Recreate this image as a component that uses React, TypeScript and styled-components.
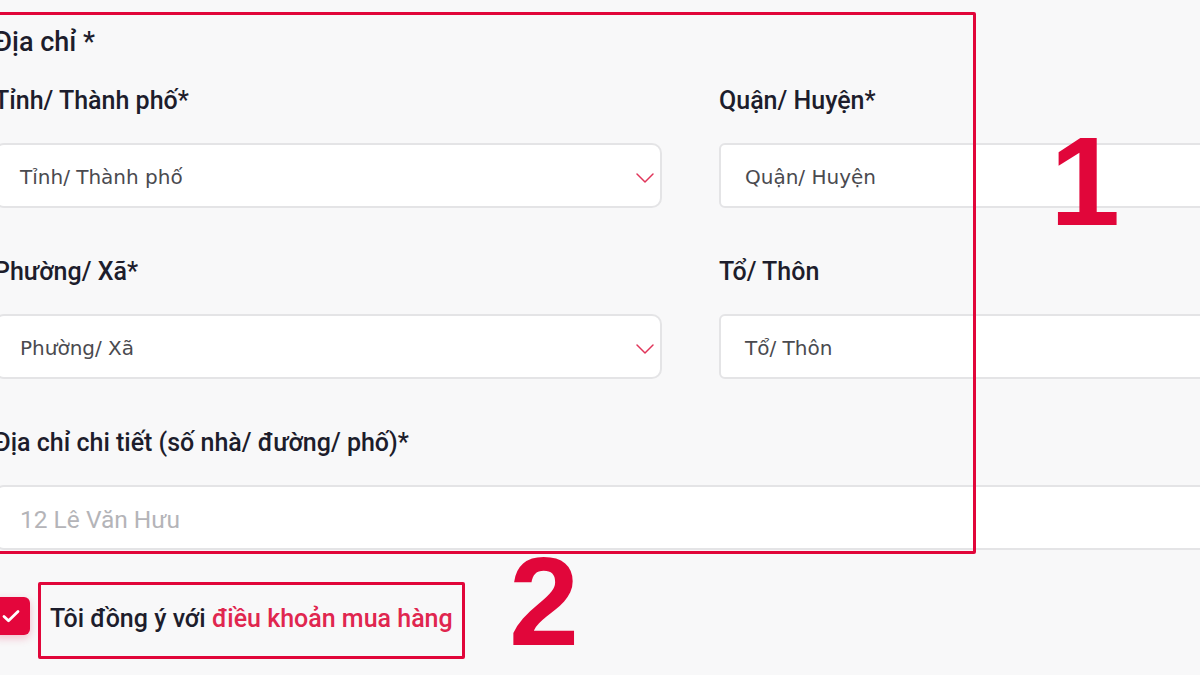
import styled, { createGlobalStyle } from "styled-components";

const GlobalStyle = createGlobalStyle`
  body {
    margin: 0;
    background: #f8f8f9;
    overflow: hidden;
  }
`;

const Page = styled.div`
  position: relative;
  width: 1200px;
  height: 675px;
  overflow: hidden;
  background: #f8f8f9;
  font-family: Roboto, "Liberation Sans", sans-serif;
  color: #1d1d2c;
`;

const Form = styled.div`
  margin-left: -6px;
  padding-top: 27px;
`;

const SectionTitle = styled.div`
  font-size: 27px;
  line-height: 30px;
  font-weight: 500;
  margin-bottom: 31px;
`;

const FieldGrid = styled.div`
  display: grid;
  grid-template-columns: 668px 668px;
  column-gap: 57px;
  row-gap: 51px;
`;

const Field = styled.div<{ $wide?: boolean }>`
  display: flex;
  flex-direction: column;
  gap: 29px;
  grid-column: ${(p) => (p.$wide ? "1 / -1" : "auto")};
`;

const Label = styled.div`
  font-size: 25px;
  line-height: 26px;
  font-weight: 500;
`;

const Control = styled.div<{ $round?: boolean }>`
  position: relative;
  height: 65px;
  box-sizing: border-box;
  display: flex;
  align-items: center;
  padding: 3px 24px 0;
  background: #fff;
  border: 2px solid #e4e4e6;
  border-radius: ${(p) => (p.$round ? "10px" : "6px")};
`;

const Placeholder = styled.span<{ $light?: boolean }>`
  font-family: ${(p) => (p.$light ? "Roboto, sans-serif" : '"DejaVu Sans", Verdana, sans-serif')};
  font-size: ${(p) => (p.$light ? "24.5px" : "20px")};
  color: ${(p) => (p.$light ? "#b4b4b8" : "#4a4a4f")};
`;

const Chevron = styled.svg`
  position: absolute;
  right: 5px;
  top: 50%;
  margin-top: -4px;
`;

const AgreeRow = styled.div`
  display: flex;
  align-items: center;
  gap: 20px;
  margin-top: 47px;
  margin-left: -2px;
`;

const CheckBox = styled.div`
  width: 38px;
  height: 38px;
  flex: none;
  border-radius: 6px;
  background: #e4063c;
  display: flex;
  align-items: center;
  justify-content: center;
  box-shadow: 0 3px 8px rgba(228, 6, 60, 0.25);
`;

const AgreeText = styled.span`
  font-size: 25px;
  font-weight: 500;
  padding-top: 4px;
`;

const TermsLink = styled.span`
  color: #e0264f;
`;

const Marker = styled.div<{ $x: number; $y: number; $w: number; $h: number }>`
  position: absolute;
  left: ${(p) => p.$x}px;
  top: ${(p) => p.$y}px;
  width: ${(p) => p.$w}px;
  height: ${(p) => p.$h}px;
  box-sizing: border-box;
  border: 3px solid #e1063a;
  border-radius: 2px;
  pointer-events: none;
`;

const StepNumber = styled.div<{ $x: number; $y: number }>`
  position: absolute;
  left: ${(p) => p.$x}px;
  top: ${(p) => p.$y}px;
  font-family: "Liberation Sans", Arial, sans-serif;
  font-weight: 700;
  font-size: 126px;
  line-height: 126px;
  color: #e1063a;
`;

function ChevronDown() {
  return (
    <Chevron width="20" height="12" viewBox="0 0 20 12" fill="none">
      <path d="M2 2l8 8 8-8" stroke="#e0355a" strokeWidth="1.5" strokeLinecap="round" strokeLinejoin="round" />
    </Chevron>
  );
}

export default function App() {
  return (
    <Page>
      <GlobalStyle />
      <Form>
        <SectionTitle>Địa chỉ *</SectionTitle>
        <FieldGrid>
          <Field>
            <Label>Tỉnh/ Thành phố*</Label>
            <Control $round>
              <Placeholder>Tỉnh/ Thành phố</Placeholder>
              <ChevronDown />
            </Control>
          </Field>
          <Field>
            <Label>Quận/ Huyện*</Label>
            <Control>
              <Placeholder>Quận/ Huyện</Placeholder>
            </Control>
          </Field>
          <Field>
            <Label>Phường/ Xã*</Label>
            <Control $round>
              <Placeholder>Phường/ Xã</Placeholder>
              <ChevronDown />
            </Control>
          </Field>
          <Field>
            <Label>Tổ/ Thôn</Label>
            <Control>
              <Placeholder>Tổ/ Thôn</Placeholder>
            </Control>
          </Field>
          <Field $wide>
            <Label>Địa chỉ chi tiết (số nhà/ đường/ phố)*</Label>
            <Control $round>
              <Placeholder $light>12 Lê Văn Hưu</Placeholder>
            </Control>
          </Field>
        </FieldGrid>
        <AgreeRow>
          <CheckBox>
            <svg width="20" height="16" viewBox="0 0 20 16" fill="none">
              <path d="M3 8.5l4.5 4.2L17 3.5" stroke="#fff" strokeWidth="2.8" strokeLinecap="round" strokeLinejoin="round" />
            </svg>
          </CheckBox>
          <AgreeText>
            Tôi đồng ý với <TermsLink>điều khoản mua hàng</TermsLink>
          </AgreeText>
        </AgreeRow>
      </Form>
      <Marker $x={-20} $y={12} $w={996} $h={542} />
      <Marker $x={38} $y={582} $w={427} $h={77} />
      <StepNumber $x={1050} $y={119}>1</StepNumber>
      <StepNumber $x={509} $y={539}>2</StepNumber>
    </Page>
  );
}
